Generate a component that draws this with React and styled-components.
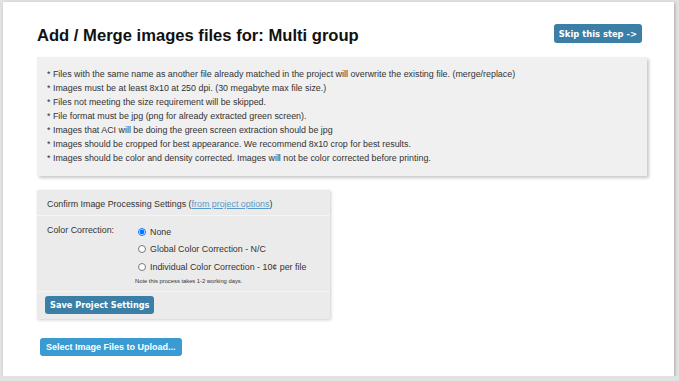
import React from "react";
import styled, { createGlobalStyle } from "styled-components";

const GlobalStyle = createGlobalStyle`
  html, body {
    margin: 0;
    padding: 0;
    background: #e2e2e2;
    font-family: "Liberation Sans", Arial, sans-serif;
    color: #222;
  }
`;

const Page = styled.div`
  margin: 2px 5px 0 3px;
  height: 374px;
  background: #fff;
  box-shadow: 1px 1px 3px rgba(0, 0, 0, 0.25);
  padding: 0 27px 0 34px;
  box-sizing: border-box;
  overflow: hidden;
`;

const Header = styled.div`
  display: flex;
  justify-content: space-between;
  align-items: flex-start;
  padding-top: 23px;
  height: 53px;
  box-sizing: border-box;
`;

const Title = styled.h1`
  margin: 0;
  font-size: 16.6px;
  font-weight: bold;
  color: #111;
  line-height: 22px;
`;

const Button = styled.button`
  border: none;
  border-radius: 3px;
  background: ${(p) => (p.$light ? "#3a9bd3" : "#3b7fa6")};
  color: #fff;
  font-family: ${(p) =>
    p.$light ? '"Liberation Sans", Arial, sans-serif' : '"DejaVu Sans", Verdana, sans-serif'};
  font-weight: bold;
  font-size: ${(p) => (p.$light ? "9px" : "8.2px")};
  padding: 0 ${(p) => (p.$light ? "6px" : "5px")};
  height: 18px;
  cursor: pointer;
  white-space: nowrap;
`;

const SkipButton = styled(Button)`
  margin-top: -1px;
  margin-right: 5px;
  height: 19px;
  font-size: 8.4px;
`;

const InfoBox = styled.div`
  margin-top: 2px;
  background: #f0f0f0;
  box-shadow: 2px 2px 3px rgba(0, 0, 0, 0.22);
  padding: 10px 10px 11px;
  font-size: 8.9px;
  line-height: 14px;
  color: #333;
`;

const Settings = styled.div`
  margin-top: 14px;
  width: 293px;
  background: #ebebeb;
  box-shadow: 1px 1px 3px rgba(0, 0, 0, 0.2);
  font-size: 8.9px;
  color: #333;
`;

const SettingsHead = styled.div`
  padding: 8px 10px 0;
  height: 26px;
  line-height: 13px;
  box-sizing: border-box;
  border-bottom: 1px solid #f5f5f5;
`;

const Link = styled.a`
  color: #5a9ac8;
  text-decoration: underline;
`;

const FieldRow = styled.div`
  display: grid;
  grid-template-columns: 91px 1fr;
  padding: 7px 10px 0;
  height: 76px;
  box-sizing: border-box;
  border-bottom: 1px solid #f5f5f5;
`;

const FieldLabel = styled.span`
  line-height: 14px;
`;

const Options = styled.div`
  display: flex;
  flex-direction: column;
`;

const Option = styled.label`
  display: flex;
  align-items: center;
  height: 17.5px;
  input {
    width: 8px;
    height: 8px;
    margin: 0 4px 0 0;
  }
`;

const Note = styled.div`
  font-size: 5.8px;
  margin-top: 2px;
  margin-left: -3px;
  color: #333;
`;

const SaveRow = styled.div`
  padding: 4px 8px 5px;
`;

const UploadRow = styled.div`
  margin-top: 17px;
  padding-left: 3px;
`;

const options = [
  "None",
  "Global Color Correction - N/C",
  "Individual Color Correction - 10¢ per file",
];

const notes = [
  "* Files with the same name as another file already matched in the project will overwrite the existing file. (merge/replace)",
  "* Images must be at least 8x10 at 250 dpi. (30 megabyte max file size.)",
  "* Files not meeting the size requirement will be skipped.",
  "* File format must be jpg (png for already extracted green screen).",
  "* Images that ACI will be doing the green screen extraction should be jpg",
  "* Images should be cropped for best appearance. We recommend 8x10 crop for best results.",
  "* Images should be color and density corrected. Images will not be color corrected before printing.",
];

export default function App() {
  return (
    <>
      <GlobalStyle />
      <Page>
        <Header>
          <Title>Add / Merge images files for: Multi group</Title>
          <SkipButton>Skip this step -&gt;</SkipButton>
        </Header>
        <InfoBox>
          {notes.map((n) => (
            <div key={n}>{n}</div>
          ))}
        </InfoBox>
        <Settings>
          <SettingsHead>
            Confirm Image Processing Settings (<Link href="#">from project options</Link>)
          </SettingsHead>
          <FieldRow>
            <FieldLabel>Color Correction:</FieldLabel>
            <Options>
              {options.map((o, i) => (
                <Option key={o}>
                  <input type="radio" name="cc" defaultChecked={i === 0} />
                  {o}
                </Option>
              ))}
              <Note>Note this process takes 1-2 working days.</Note>
            </Options>
          </FieldRow>
          <SaveRow>
            <Button>Save Project Settings</Button>
          </SaveRow>
        </Settings>
        <UploadRow>
          <Button $light>Select Image Files to Upload...</Button>
        </UploadRow>
      </Page>
    </>
  );
}
